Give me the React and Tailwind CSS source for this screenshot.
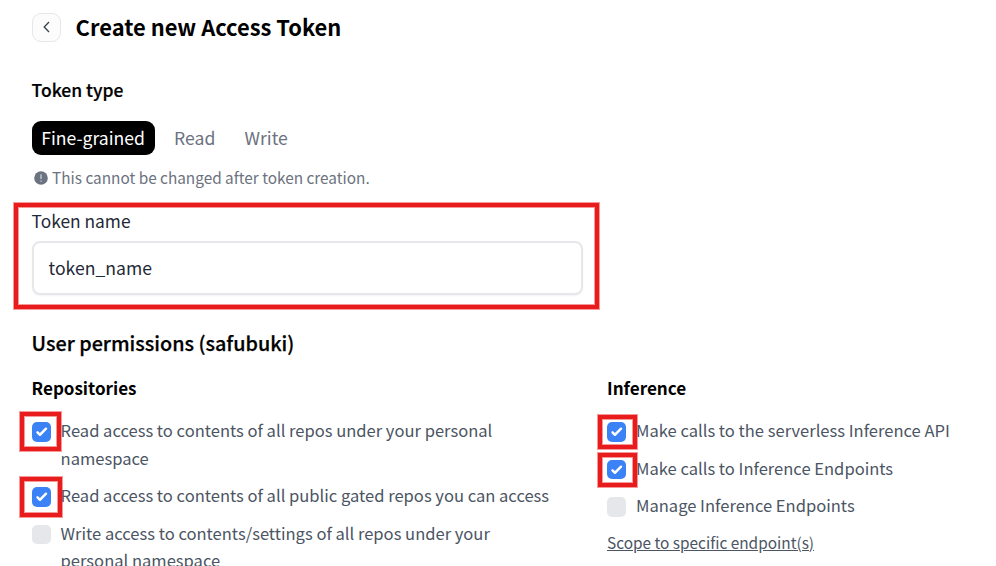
function Mark({ className }) {
  return (
    <span
      className={`pointer-events-none absolute z-10 border-4 border-[#e81c1c] shadow-[0_0_0_1px_rgba(232,28,28,0.45),inset_0_0_0_1px_rgba(232,28,28,0.45)] ${className}`}
    />
  );
}

function Permission({ checked, mark, children, textClass = "" }) {
  return (
    <label className="relative flex items-start gap-[9.5px] leading-[27.5px] text-[#4b5563]">
      <span
        className={`mt-[5px] flex size-[19.5px] shrink-0 items-center justify-center rounded-[5px] ${checked ? "bg-[#3b82f6]" : "bg-[#e5e7eb]"}`}
      >
        {checked && (
          <svg viewBox="0 0 16 16" className="size-[19.5px] fill-white">
            <path d="M12.207 4.793a1 1 0 0 1 0 1.414l-5 5a1 1 0 0 1-1.414 0l-2-2a1 1 0 0 1 1.414-1.414L6.5 9.086l4.293-4.293a1 1 0 0 1 1.414 0z" />
          </svg>
        )}
      </span>
      <span className={`text-[16.56px] ${textClass}`}>{children}</span>
      {mark && <Mark className={mark} />}
    </label>
  );
}

export default function App() {
  return (
    <main className="h-[566px] w-[996px] overflow-hidden bg-white pl-[31.6px] font-['Noto_Sans_CJK_JP','Noto_Sans_CJK_SC',sans-serif] text-black">
      <header className="flex h-[54px] items-center gap-[15px]">
        <button className="flex size-[29px] items-center justify-center rounded-[9px] border border-[#e5e7eb] bg-[#fcfcfd]">
          <svg viewBox="0 0 12 12" className="ml-px size-3 fill-none stroke-[#374151] stroke-[1.3]">
            <path d="M8 1 3.2 6 8 11" />
          </svg>
        </button>
        <h1 className="text-[21.9px] leading-[30px] font-bold whitespace-nowrap">Create new Access Token</h1>
      </header>
      <h2 className="mt-[22px] text-[17.5px] leading-7 font-medium [-webkit-text-stroke:0.2px_black]">Token type</h2>
      <div className="mt-[17px] flex h-[34px] items-center text-[17.6px] text-[#6b7280]">
        <span className="flex h-full w-[123px] items-center justify-center rounded-[9px] bg-black text-white">Fine-grained</span>
        <span className="ml-[19.5px] w-[70.5px]">Read</span>
        <span>Write</span>
      </div>
      <p className="mt-[11px] flex h-6 items-center gap-[4.5px] text-[15.35px] text-[#6b7280]">
        <svg viewBox="0 0 14 14" className="ml-[2px] size-3.5">
          <circle cx="7" cy="7" r="6.8" className="fill-[#6b7280]" />
          <path d="M7 3.2v4.8M7 9.5v1.2" className="stroke-[#d1d5db] stroke-[1.2]" />
        </svg>
        This cannot be changed after token creation.
      </p>
      <section className="relative mt-[18px] h-[87px]">
        <label className="block text-[17.35px] leading-[26px] text-[#1f2937]">Token name</label>
        <div className="mt-[7px] flex h-[54px] w-[551px] items-center rounded-lg border-2 border-[#e5e7eb] pt-px pl-[15px] text-[17.6px] text-[#1f2937] shadow-xs">
          token_name
        </div>
        <Mark className="-top-[5px] -left-[17.6px] h-[106px] w-[585px]" />
      </section>
      <h2 className="mt-[33px] text-[19.8px] leading-[30px] font-medium [-webkit-text-stroke:0.25px_black]">User permissions (safubuki)</h2>
      <div className="mt-4 flex">
        <section className="w-[575.4px]">
          <h3 className="h-[27px] text-[17.05px] leading-[27px] font-bold">Repositories</h3>
          <div className="mt-4 flex flex-col gap-[10px]">
            <Permission checked mark="-left-[11.6px] -top-[5px] h-[39px] w-[41px]" textClass="w-[500px]">
              Read access to contents of all repos under your personal namespace
            </Permission>
            <Permission checked mark="-left-[11.6px] -top-[5px] h-10 w-[42px]" textClass="w-[500px]">
              Read access to contents of all public gated repos you can access
            </Permission>
            <Permission textClass="w-[500px]">
              Write access to contents/settings of all repos under your personal namespace
            </Permission>
          </div>
        </section>
        <section>
          <h3 className="h-[27px] text-[17.1px] leading-[27px] font-bold">Inference</h3>
          <div className="mt-4 flex flex-col gap-[10px]">
            <Permission checked mark="-left-[9px] -top-[2px] h-[34px] w-[39px]">
              Make calls to the serverless Inference API
            </Permission>
            <Permission checked mark="-left-[9px] -top-[2px] h-[34px] w-[39px]">
              Make calls to Inference Endpoints
            </Permission>
            <Permission>Manage Inference Endpoints</Permission>
            <a className="-mt-px text-[15.4px] leading-[27px] text-[#4b5563] underline">Scope to specific endpoint(s)</a>
          </div>
        </section>
      </div>
    </main>
  );
}
